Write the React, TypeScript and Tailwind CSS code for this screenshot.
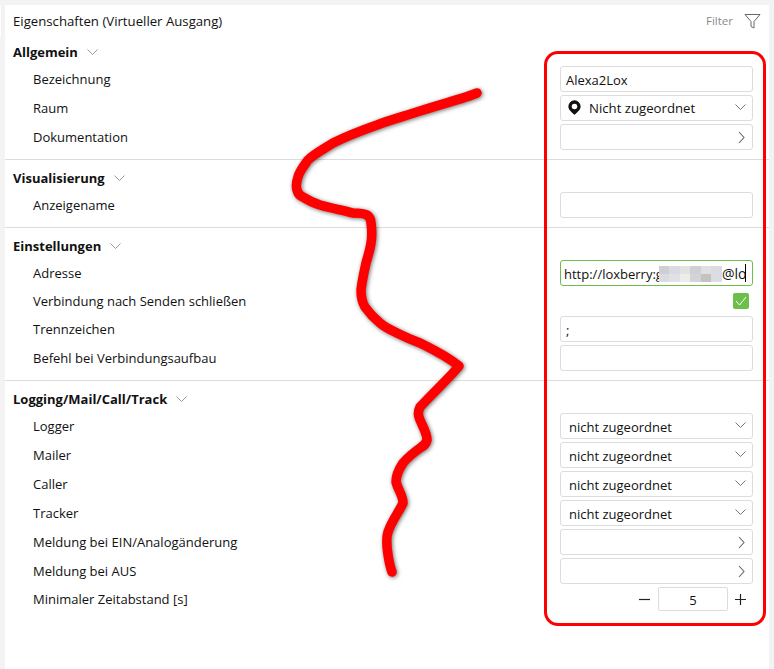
import type { ReactNode } from "react";

function Chevron({ className }: { className?: string }) {
  return (
    <svg width="11" height="6" viewBox="0 0 11 6" fill="none" stroke="currentColor" strokeWidth="1" className={className}>
      <path d="M0.5 0.5l5 5 5-5" />
    </svg>
  );
}

function ChevronRight() {
  return (
    <svg width="7" height="13" viewBox="0 0 7 13" fill="none" stroke="#666" strokeWidth="1.1">
      <path d="M1 1l5 5.5-5 5.5" />
    </svg>
  );
}

function Pin() {
  return (
    <svg width="13" height="15" viewBox="0 0 14 16">
      <path
        fillRule="evenodd"
        d="M7 0.3a6.6 6.6 0 0 1 6.6 6.6C13.6 10.6 9.8 13.4 7 15.8 4.2 13.4 0.4 10.6 0.4 6.9A6.6 6.6 0 0 1 7 0.3zM7 3.9a3 3 0 1 0 0 6A3 3 0 0 0 7 3.9z"
        fill="#111"
      />
    </svg>
  );
}

function Field({ children, className = "", border = "border-[#dcdcdc]" }: { children?: ReactNode; className?: string; border?: string }) {
  return (
    <div className={`mb-px flex h-[26px] w-[193px] items-center overflow-hidden rounded-[3px] border bg-white ${border} ${className}`}>
      {children}
    </div>
  );
}

function Select({ value }: { value: string }) {
  return (
    <Field className="justify-between pl-[8px] pr-[6px]">
      <span className="mt-[2px]">{value}</span>
      <Chevron className="mb-[3px] text-[#777]" />
    </Field>
  );
}

function LinkField() {
  return (
    <Field className="justify-end pr-[7px]">
      <ChevronRight />
    </Field>
  );
}

function Row({ label, children, h = "h-[29px]" }: { label: string; children?: ReactNode; h?: string }) {
  return (
    <div className={`flex items-center justify-between pl-[28px] pr-[16px] ${h}`}>
      <span className="-mt-px">{label}</span>
      {children}
    </div>
  );
}

function Section({ title, children, first, last }: { title: string; children: ReactNode; first?: boolean; last?: boolean }) {
  return (
    <section className={`${first ? "" : "pt-[5px]"} ${last ? "" : "border-b border-[#dcdcdc] pb-[7px]"}`}>
      <div className="flex h-[26px] items-center gap-[9px] pl-[8px] font-bold text-[#111]">
        <span>{title}</span>
        <Chevron className="text-[#999]" />
      </div>
      {children}
    </section>
  );
}

const mosaic = [
  "#cfcfd3", "#d8dbe2", "#e2e2e2", "#cfd0d6", "#e0e0e0", "#dadce0",
  "#dcdce0", "#dfe1e6", "#ececea", "#d3d4da", "#c6c2c0", "#dcdde2",
];

export default function App() {
  return (
    <div className="relative h-[669px] w-[774px] overflow-hidden bg-[#f3f3f3] pr-[5px] pt-[5px] pl-[5px] font-['Open_Sans',sans-serif] text-[13px] leading-none text-[#111]">
      <div className="absolute left-0 top-[5px] h-[32px] w-[1px] bg-white" />
      <div className="h-[664px] bg-white">
        <header className="flex h-[34px] items-center justify-between pl-[8px] pr-[8px]">
          <span className="text-[13.2px]">Eigenschaften (Virtueller Ausgang)</span>
          <div className="-mt-[2px] flex items-center gap-[11px] text-[11.5px] text-[#8a8a8a]">
            <span>Filter</span>
            <svg width="17" height="17" viewBox="0 0 17 17" fill="none" stroke="#666" strokeWidth="1">
              <path d="M1 1.5h15l-6 7v6.5l-3-1.5v-5z" />
            </svg>
          </div>
        </header>

        <Section title="Allgemein" first>
          <Row label="Bezeichnung">
            <Field className="pl-[5px]">
              <span className="mt-[2px]">Alexa2Lox</span>
            </Field>
          </Row>
          <Row label="Raum">
            <Field className="justify-between pl-[7px] pr-[6px]">
              <span className="flex items-center gap-[8px]">
                <Pin />
                <span className="mt-[2px] text-[13.2px]">Nicht zugeordnet</span>
              </span>
              <Chevron className="mb-[3px] text-[#777]" />
            </Field>
          </Row>
          <Row label="Dokumentation">
            <LinkField />
          </Row>
        </Section>

        <Section title="Visualisierung">
          <Row label="Anzeigename">
            <Field />
          </Row>
        </Section>

        <Section title="Einstellungen">
          <Row label="Adresse">
            <Field border="border-[#6cc04a]" className="pl-[3px]">
              <span className="mt-[2px] shrink-0">http://loxberry:g</span>
              <span className="-ml-[4px] mt-[2px] grid shrink-0 grid-cols-[repeat(6,10.5px)] grid-rows-[8px_8px]">
                {mosaic.map((c, i) => (
                  <span key={i} style={{ background: c }} />
                ))}
              </span>
              <span className="mt-[2px] shrink-0 text-[14px]">@lo</span>
              <span className="-ml-px h-[18px] w-px shrink-0 bg-black" />
            </Field>
          </Row>
          <Row label="Verbindung nach Senden schließen" h="h-[27px]">
            <div className="mb-px mr-[4px] flex h-[16px] w-[16px] items-center justify-center rounded-[2px] bg-[#6cc04a]">
              <svg width="12" height="10" viewBox="0 0 12 10" fill="none" stroke="#fff" strokeWidth="1">
                <path d="M1 5l3.5 4L11 1" />
              </svg>
            </div>
          </Row>
          <Row label="Trennzeichen">
            <Field className="pl-[5px]">
              <span className="mt-[2px]">;</span>
            </Field>
          </Row>
          <Row label="Befehl bei Verbindungsaufbau">
            <Field />
          </Row>
        </Section>

        <Section title="Logging/Mail/Call/Track" last>
          <Row label="Logger">
            <Select value="nicht zugeordnet" />
          </Row>
          <Row label="Mailer">
            <Select value="nicht zugeordnet" />
          </Row>
          <Row label="Caller">
            <Select value="nicht zugeordnet" />
          </Row>
          <Row label="Tracker">
            <Select value="nicht zugeordnet" />
          </Row>
          <Row label="Meldung bei EIN/Analogänderung">
            <LinkField />
          </Row>
          <Row label="Meldung bei AUS">
            <LinkField />
          </Row>
          <Row label="Minimaler Zeitabstand [s]" h="h-[27px]">
            <div className="mb-px flex w-[193px] items-center justify-end">
              <svg width="11" height="11" viewBox="0 0 11 11" stroke="#222" strokeWidth="1.2">
                <path d="M0 5.5h11" />
              </svg>
              <div className="ml-[8px] mr-[7px] flex h-[24px] w-[70px] items-center justify-center rounded-[2px] border border-[#dcdcdc]">
                <span className="mt-[2px]">5</span>
              </div>
              <svg width="11" height="11" viewBox="0 0 11 11" stroke="#222" strokeWidth="1.2" className="mr-[7px]">
                <path d="M0 5.5h11M5.5 0v11" />
              </svg>
            </div>
          </Row>
        </Section>
      </div>

      {/* red annotations drawn over the screenshot */}
      <div className="pointer-events-none absolute left-[544px] top-[51px] h-[575px] w-[222px] rounded-[14px] border-[3px] border-[#ff0000]" />
      <svg
        width="774"
        height="669"
        viewBox="0 0 774 669"
        fill="none"
        className="pointer-events-none absolute left-0 top-0 drop-shadow-[1px_1px_2px_rgba(0,0,0,0.55)]"
      >
        <path
          d="M477 93 C465 98 445 103 420 111 C405 116 390 120 377 125 C360 131 345 137 333 143 C322 150 314 154 308 160 C303 167 299 172 298 177 C296 183 296 187 297 190 C298 194 300 196 303 197 C309 201 314 203 320 205 C330 208 342 210 353 213 C360 213 365 214 367 215 C370 217 371 220 371 223 C372 230 372 237 371 243 C370 250 368 256 366 263 C364 272 362 281 361 290 C361 297 362 302 365 307 C370 314 375 319 380 323 C386 328 391 330 397 333 C405 337 412 340 420 343 C432 349 445 355 459 366 C453 374 433 393 420 407 C418 411 418 414 419 417 C421 424 427 432 427 440 C426 444 424 446 420 448 C413 453 408 457 403 463 C399 469 396 475 396 482 C398 490 403 495 403 503 C399 512 392 520 388 532 C386 538 387 542 387 547 C388 556 389 564 392 572"
          stroke="#ff0000"
          strokeWidth="9.5"
          strokeLinecap="round"
          strokeLinejoin="round"
        />
      </svg>
    </div>
  );
}
